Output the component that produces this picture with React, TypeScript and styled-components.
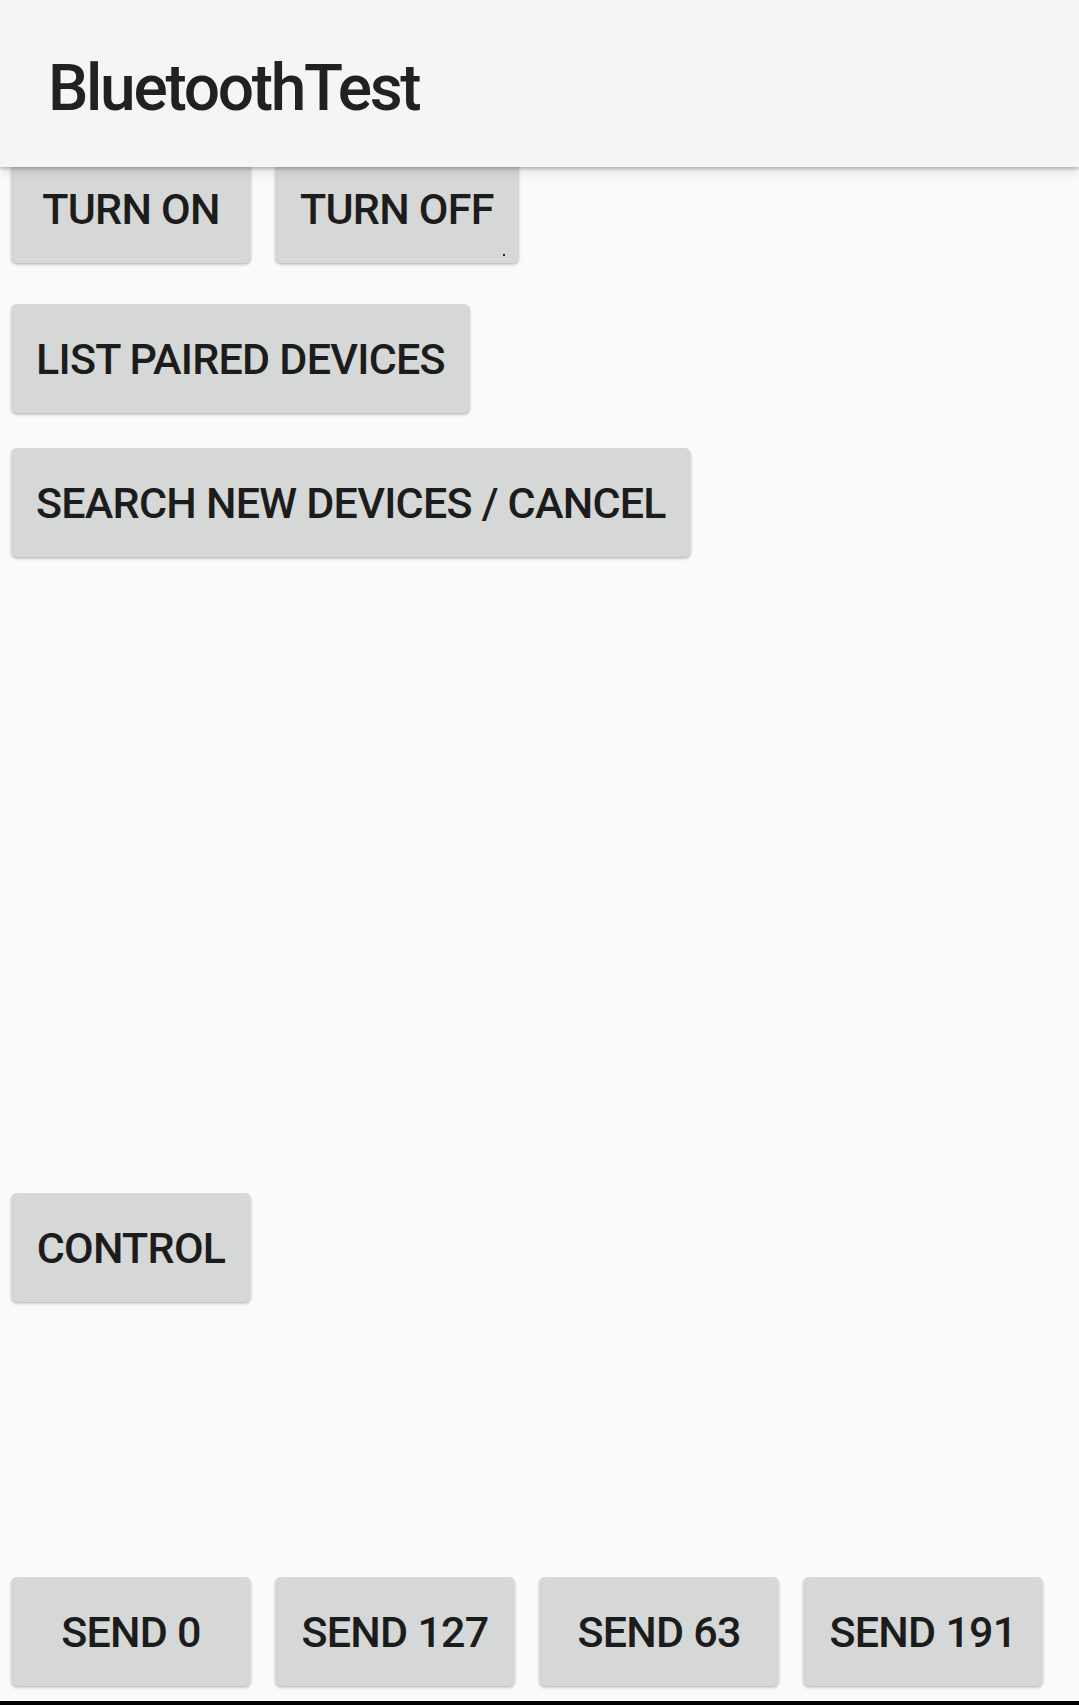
import React from "react";
import styled, { createGlobalStyle } from "styled-components";

const GlobalStyle = createGlobalStyle`
  html, body {
    margin: 0;
    padding: 0;
    background: #fafafa;
  }
  body {
    font-family: Roboto, "Noto Sans", "Liberation Sans", sans-serif;
    -webkit-font-smoothing: antialiased;
  }
`;

const Screen = styled.div`
  width: 1079px;
  height: 1705px;
  display: flex;
  flex-direction: column;
  background: #fafafa;
  overflow: hidden;
`;

const AppBar = styled.header`
  position: relative;
  z-index: 2;
  flex: 0 0 auto;
  height: 167px;
  margin-bottom: -13px;
  display: flex;
  align-items: center;
  padding: 9px 0 0 48px;
  box-sizing: border-box;
  background: #f5f5f5;
  box-shadow: 0 2px 3px rgba(0, 0, 0, 0.22), 0 5px 12px rgba(0, 0, 0, 0.1);
`;

const Title = styled.h1`
  margin: 0;
  font-family: Roboto, "Noto Sans", sans-serif;
  font-weight: 500;
  font-size: 64px;
  color: #212121;
  letter-spacing: -2.3px;
`;

const Content = styled.main`
  position: relative;
  z-index: 1;
  flex: 1 1 auto;
  display: flex;
  flex-direction: column;
  padding: 0 0 0 11px;
`;

const Row = styled.div<{ $top?: number }>`
  display: flex;
  gap: 24px;
  margin-top: ${(p) => p.$top ?? 0}px;
`;

const Button = styled.button`
  position: relative;
  flex: 0 0 auto;
  min-width: 240px;
  height: 109px;
  padding: 0 25px;
  box-sizing: border-box;
  display: flex;
  align-items: center;
  justify-content: center;
  border: none;
  border-radius: 6px;
  background: #d6d7d7;
  color: #1c1c1c;
  font-family: Roboto, "Noto Sans", sans-serif;
  font-weight: 500;
  font-size: 43px;
  text-transform: uppercase;
  letter-spacing: -0.75px;
  box-shadow: 0 2px 3px rgba(0, 0, 0, 0.18), 0 1px 1px rgba(0, 0, 0, 0.08);
  cursor: pointer;
`;

const Speck = styled.span`
  position: absolute;
  right: 14px;
  bottom: 7px;
  width: 2px;
  height: 2px;
  background: #222;
`;

const BottomEdge = styled.div`
  flex: 0 0 auto;
  height: 4px;
  margin-top: 15px;
  background: #000;
`;

export default function App() {
  return (
    <>
      <GlobalStyle />
      <Screen>
        <AppBar>
          <Title>BluetoothTest</Title>
        </AppBar>
        <Content>
          <Row>
            <Button>Turn on</Button>
            <Button>
              Turn off
              <Speck />
            </Button>
          </Row>
          <Row $top={41}>
            <Button>List paired devices</Button>
          </Row>
          <Row $top={35}>
            <Button>Search new devices / cancel</Button>
          </Row>
          <Row $top={636}>
            <Button>Control</Button>
          </Row>
          <Row $top={275}>
            <Button>Send 0</Button>
            <Button>Send 127</Button>
            <Button>Send 63</Button>
            <Button>Send 191</Button>
          </Row>
        </Content>
        <BottomEdge />
      </Screen>
    </>
  );
}
